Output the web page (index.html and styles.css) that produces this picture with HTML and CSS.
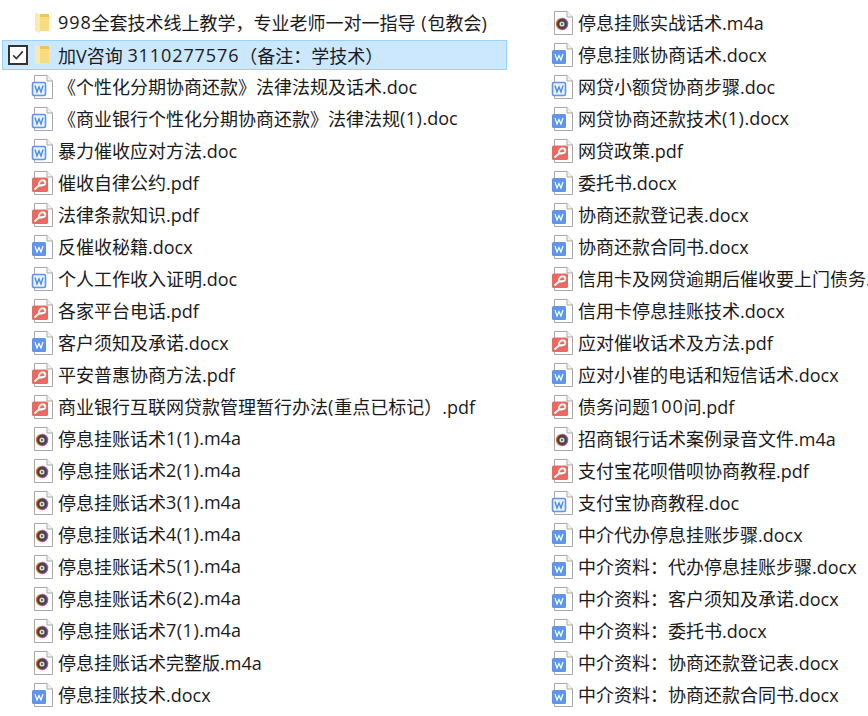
FILE: index.html
```html
<!DOCTYPE html>
<html lang="en">
<head>
	<meta charset="UTF-8">
	<title>Document</title>
	<link rel="stylesheet" href="styles.css">
</head>
<body>
	<svg class="defs" width="0" height="0">
		<symbol id="folder" viewBox="0 0 24 24">
			<path d="M10 3H19V20H10Z" fill="#efc25a"/>
			<path d="M10 6H19V20H10Z" fill="#fadb7e"/>
			<path d="M5 2L10 3V22L5 20Z" fill="#fce9ad"/>
		</symbol>
		<symbol id="page" viewBox="0 0 24 24">
			<path d="M4.500 .5H17L22.500 6V23.500H4.500Z" fill="#fff" stroke="#a8a8a8"/>
			<path d="M17 .5V6H22.500" fill="#f2f2f2" stroke="#a8a8a8"/>
		</symbol>
		<symbol id="doc" viewBox="0 0 24 24">
			<use href="#page"/>
			<rect x="2.500" y="7.500" width="13" height="13" rx="1.500" fill="#eaf2ff" stroke="#5b95f0" stroke-width="1.600"/>
			<path d="M5 10.500L7 17L9 12L11 17L13 10.500" fill="none" stroke="#4f8cec" stroke-width="1.400"/>
		</symbol>
		<symbol id="docx" viewBox="0 0 24 24">
			<use href="#page"/>
			<rect x="2" y="7" width="14" height="14" rx="1.500" fill="#5b95f0"/>
			<path d="M5 11L7 17L9 12.500L11 17L13 11" fill="none" stroke="#fff" stroke-width="1.200"/>
		</symbol>
		<symbol id="pdf" viewBox="0 0 24 24">
			<use href="#page"/>
			<rect x="2" y="6.500" width="16" height="14.500" rx="1.500" fill="#ea6a62"/>
			<path d="M4.500 18.500L9 14.500M9 14.500C8.500 10.500 11 9 13.500 9.500C16 10 16 13.500 13.500 14C11.500 14.400 10 14.500 9 14.500" fill="none" stroke="#fff" stroke-width="1.800"/>
		</symbol>
		<symbol id="m4a" viewBox="0 0 24 24">
			<use href="#page"/>
			<circle cx="12" cy="13" r="6.200" fill="#e2703a"/>
			<path d="M12 6.800A6.200 6.200 0 0 1 12 19.200Z" fill="#9a58b8"/>
			<circle cx="12" cy="13" r="5" fill="#444040"/>
			<circle cx="12" cy="13" r="2.600" fill="#d8d8d8"/>
			<circle cx="12" cy="13" r=".9" fill="#444040"/>
		</symbol>
	</svg>

	<div class="files">
		<ul class="col">
			<li><svg class="ico"><use href="#folder"/></svg><span class="num">998</span>全套技术线上教学，专业老师一对一指导<span class="wide"> (</span>包教会)</li>
			<li class="active"><span class="check"><svg viewBox="0 0 20 20"><path d="M4 10.500L8 14.500L16 5.500"/></svg></span><svg class="ico"><use href="#folder"/></svg>加V咨询 <span class="num">3110277576</span>（备注：学技术）</li>
			<li><svg class="ico"><use href="#doc"/></svg>《个性化分期协商还款》法律法规及话术.doc</li>
			<li><svg class="ico"><use href="#doc"/></svg>《商业银行个性化分期协商还款》法律法规<span class="par">(1)</span>.doc</li>
			<li><svg class="ico"><use href="#doc"/></svg>暴力催收应对方法.doc</li>
			<li><svg class="ico"><use href="#pdf"/></svg>催收自律公约.pdf</li>
			<li><svg class="ico"><use href="#pdf"/></svg>法律条款知识.pdf</li>
			<li><svg class="ico"><use href="#docx"/></svg>反催收秘籍.docx</li>
			<li><svg class="ico"><use href="#doc"/></svg>个人工作收入证明.doc</li>
			<li><svg class="ico"><use href="#pdf"/></svg>各家平台电话.pdf</li>
			<li><svg class="ico"><use href="#docx"/></svg>客户须知及承诺.docx</li>
			<li><svg class="ico"><use href="#pdf"/></svg>平安普惠协商方法.pdf</li>
			<li><svg class="ico"><use href="#pdf"/></svg>商业银行互联网贷款管理暂行办法<span class="wide">(</span>重点已标记）.pdf</li>
			<li><svg class="ico"><use href="#m4a"/></svg>停息挂账话术<span class="par">1(1)</span>.m4a</li>
			<li><svg class="ico"><use href="#m4a"/></svg>停息挂账话术<span class="par">2(1)</span>.m4a</li>
			<li><svg class="ico"><use href="#m4a"/></svg>停息挂账话术<span class="par">3(1)</span>.m4a</li>
			<li><svg class="ico"><use href="#m4a"/></svg>停息挂账话术<span class="par">4(1)</span>.m4a</li>
			<li><svg class="ico"><use href="#m4a"/></svg>停息挂账话术<span class="par">5(1)</span>.m4a</li>
			<li><svg class="ico"><use href="#m4a"/></svg>停息挂账话术<span class="par">6(2)</span>.m4a</li>
			<li><svg class="ico"><use href="#m4a"/></svg>停息挂账话术<span class="par">7(1)</span>.m4a</li>
			<li><svg class="ico"><use href="#m4a"/></svg>停息挂账话术完整版.m4a</li>
			<li><svg class="ico"><use href="#docx"/></svg>停息挂账技术.docx</li>
		</ul>
		<ul class="col">
			<li><svg class="ico"><use href="#m4a"/></svg>停息挂账实战话术.m4a</li>
			<li><svg class="ico"><use href="#docx"/></svg>停息挂账协商话术.docx</li>
			<li><svg class="ico"><use href="#doc"/></svg>网贷小额贷协商步骤.doc</li>
			<li><svg class="ico"><use href="#docx"/></svg>网贷协商还款技术<span class="par">(1)</span>.docx</li>
			<li><svg class="ico"><use href="#pdf"/></svg>网贷政策.pdf</li>
			<li><svg class="ico"><use href="#docx"/></svg>委托书.docx</li>
			<li><svg class="ico"><use href="#docx"/></svg>协商还款登记表.docx</li>
			<li><svg class="ico"><use href="#docx"/></svg>协商还款合同书.docx</li>
			<li><svg class="ico"><use href="#pdf"/></svg>信用卡及网贷逾期后催收要上门债务...</li>
			<li><svg class="ico"><use href="#docx"/></svg>信用卡停息挂账技术.docx</li>
			<li><svg class="ico"><use href="#pdf"/></svg>应对催收话术及方法.pdf</li>
			<li><svg class="ico"><use href="#docx"/></svg>应对小崔的电话和短信话术.docx</li>
			<li><svg class="ico"><use href="#pdf"/></svg>债务问题<span class="num">100</span>问.pdf</li>
			<li><svg class="ico"><use href="#m4a"/></svg>招商银行话术案例录音文件.m4a</li>
			<li><svg class="ico"><use href="#pdf"/></svg>支付宝花呗借呗协商教程.pdf</li>
			<li><svg class="ico"><use href="#doc"/></svg>支付宝协商教程.doc</li>
			<li><svg class="ico"><use href="#docx"/></svg>中介代办停息挂账步骤.docx</li>
			<li><svg class="ico"><use href="#docx"/></svg>中介资料：代办停息挂账步骤.docx</li>
			<li><svg class="ico"><use href="#docx"/></svg>中介资料：客户须知及承诺.docx</li>
			<li><svg class="ico"><use href="#docx"/></svg>中介资料：委托书.docx</li>
			<li><svg class="ico"><use href="#docx"/></svg>中介资料：协商还款登记表.docx</li>
			<li><svg class="ico"><use href="#docx"/></svg>中介资料：协商还款合同书.docx</li>
		</ul>
	</div>
</body>
</html>
```

FILE: styles.css
```css
*{margin:0;padding:0;box-sizing:border-box;}
html,body{height:100%;overflow:hidden;}
body{background:#fff;color:#1a1a1a;font-family:"Open Sans","Noto Sans CJK SC",sans-serif;font-size:18px;}
ul{list-style:none;}
.defs{position:absolute;}
.files{display:grid;grid-template-columns:505px 346px;column-gap:15px;padding:8px 0 0 2px;}
.col li{position:relative;display:flex;align-items:center;height:32px;padding:0 0 4px 28px;white-space:pre;overflow:hidden;}
.ico{width:24px;height:24px;margin:2px 4px 0 0;flex:none;}
.col li.active{height:30px;margin-bottom:2px;padding-bottom:0;background:#cce8ff;box-shadow:inset 0 0 0 1px #99d1ff;}
.col li.active .ico{margin-top:0;}
.num{letter-spacing:.9px;}
.par{letter-spacing:.5px;}
.wide{letter-spacing:1px;}
.check{position:absolute;left:6px;top:5px;width:20px;height:20px;background:#fff;border:2px solid #333;}
.check svg{display:block;width:16px;height:16px;fill:none;stroke:#333;stroke-width:2;}
```
